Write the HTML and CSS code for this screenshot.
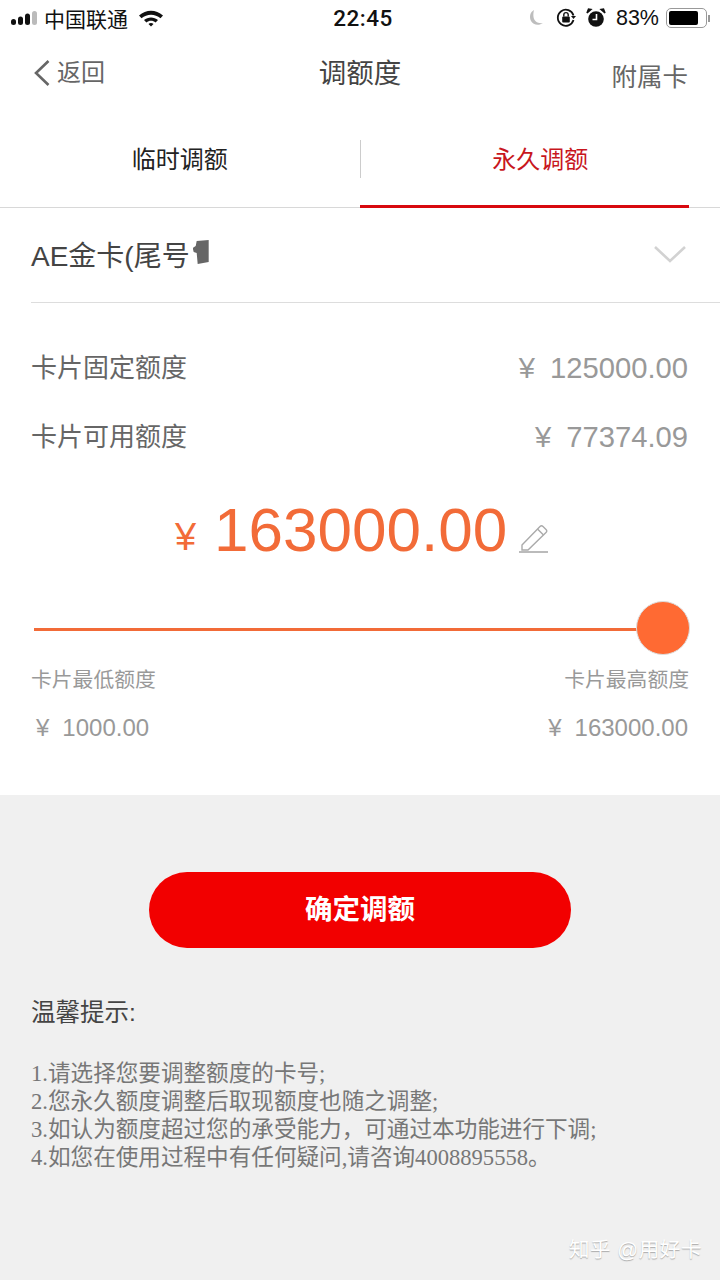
FILE: index.html
```html
<!DOCTYPE html>
<html lang="zh-CN">
<head>
    <meta charset="UTF-8" />
    <meta name="viewport" content="width=device-width, initial-scale=1.0" />
    <title>调额度</title>
    <link rel="stylesheet" href="styles.css">
</head>
<body>
  <div class="page">
    <!-- STATUS BAR -->
    <div class="status-bar">
      <div class="status-left">
        <svg class="signal" width="28" height="16" viewBox="0 0 28 16">
          <rect x="0" y="9" width="5" height="6" rx="2.5" fill="#111"/>
          <rect x="7" y="6.5" width="5" height="8.5" rx="2.5" fill="#111"/>
          <rect x="14" y="3.5" width="5" height="11.5" rx="2.5" fill="#111"/>
          <rect x="21" y="1" width="5" height="14" rx="2.5" fill="#bbb"/>
        </svg>
        <span class="carrier">中国联通</span>
        <svg class="wifi" width="26" height="18" viewBox="0 0 26 18">
          <path d="M1 6.5C8 0 18 0 25 6.5L22.5 9.2C17 4.5 9 4.5 3.5 9.2Z" fill="#111"/>
          <path d="M6 11C10 7.6 16 7.6 20 11L17.6 13.5C15 11.3 11 11.3 8.4 13.5Z" fill="#111"/>
          <path d="M10.5 15C12 13.8 14 13.8 15.5 15L13 17.5Z" fill="#111"/>
        </svg>
      </div>
      <div class="status-time">22:45</div>
      <div class="status-right">
        <svg width="18" height="18" viewBox="0 0 18 18">
          <path d="M7 1C3 3 2 8 4 12C6 16 12 17 16 14C11 15 7 12 6.5 8C6.2 5.5 6.5 3 7 1Z" fill="#bdbdbd"/>
        </svg>
        <svg class="lock" width="20" height="20" viewBox="0 0 20 20">
          <path d="M17.5 12A8 8 0 1 1 17.5 7.5" fill="none" stroke="#111" stroke-width="1.8"/>
          <path d="M15 8H20L17.5 11Z" fill="#111"/>
          <rect x="6.2" y="8.5" width="7.6" height="6" rx="1" fill="#111"/>
          <path d="M7.8 8.5V6.8A2.2 2.2 0 0 1 12.2 6.8V8.5" fill="none" stroke="#111" stroke-width="1.4"/>
        </svg>
        <svg class="alarm" width="20" height="20" viewBox="0 0 20 20">
          <circle cx="10" cy="11" r="7.8" fill="#111"/>
          <path d="M1 5L5 1.5L2.5 1ZM19 5L15 1.5L17.5 1Z" fill="#111" stroke="#111" stroke-width="1.5"/>
          <path d="M10.5 6V11.5H6.5" fill="none" stroke="#fff" stroke-width="1.6"/>
        </svg>
        <span class="battery-pct">83%</span>
        <div class="battery"><div class="battery-fill"></div></div>
        <div class="battery-tip"></div>
      </div>
    </div>

    <!-- NAV -->
    <div class="nav">
      <div class="nav-back">
        <svg width="18" height="28" viewBox="0 0 18 28">
          <path d="M15.5 2L3 14L15.5 26" fill="none" stroke="#666" stroke-width="2.6"/>
        </svg>
        <span class="nav-back-text">返回</span>
      </div>
      <div class="nav-title">调额度</div>
      <div class="nav-extra">附属卡</div>
    </div>

    <!-- TABS -->
    <div class="tabs">
      <div class="tab">临时调额</div>
      <div class="tab-sep"></div>
      <div class="tab active">永久调额</div>
    </div>

    <!-- MAIN CARD -->
    <div class="panel">
      <div class="card-select">
        <div class="card-name">AE金卡(尾号<span class="card-mask"></span></div>
        <svg width="34" height="20" viewBox="0 0 34 20">
          <path d="M2 3L17 17L32 3" fill="none" stroke="#d2d2d2" stroke-width="2.6"/>
        </svg>
      </div>

      <div class="info-row first">
        <span class="info-label">卡片固定额度</span>
        <span class="info-val"><span class="yen">¥</span>125000.00</span>
      </div>
      <div class="info-row">
        <span class="info-label">卡片可用额度</span>
        <span class="info-val"><span class="yen">¥</span>77374.09</span>
      </div>

      <div class="amount">
        <span class="amount-yen">¥</span>
        <span class="amount-num">163000.00</span>
        <svg class="pencil" width="30" height="32" viewBox="0 0 30 32">
          <path d="M3 24L21 5.5C22 4.5 23 4.5 24 5.5L27 8.5C28 9.5 28 10.5 27 11.5L9 29H3Z" fill="none" stroke="#aaa" stroke-width="1.4"/>
          <path d="M18.5 8L24.5 14" fill="none" stroke="#aaa" stroke-width="1.4"/>
          <path d="M0 31H29" fill="none" stroke="#aaa" stroke-width="1.6"/>
        </svg>
      </div>

      <div class="slider">
        <div class="slider-track"></div>
        <div class="slider-knob"></div>
      </div>

      <div class="limit-row labels">
        <span>卡片最低额度</span>
        <span>卡片最高额度</span>
      </div>
      <div class="limit-row values">
        <span><span class="yen small">¥</span>1000.00</span>
        <span><span class="yen small">¥</span>163000.00</span>
      </div>
    </div>

    <!-- BOTTOM -->
    <div class="bottom">
      <button class="confirm-btn">确定调额</button>
      <div class="tips-title">温馨提示:</div>
      <div class="tips">
        <p>1.请选择您要调整额度的卡号;</p>
        <p>2.您永久额度调整后取现额度也随之调整;</p>
        <p>3.如认为额度超过您的承受能力，可通过本功能进行下调;</p>
        <p>4.如您在使用过程中有任何疑问,请咨询4008895558。</p>
      </div>
      <div class="watermark">知乎 @用好卡</div>
    </div>
  </div>
</body>
</html>
```

FILE: styles.css
```css
* {
    box-sizing: border-box;
}

body {
    margin: 0;
    font-family: "Liberation Sans", "Noto Sans CJK SC", sans-serif;
    background: #fff;
}

.page {
    width: 720px;
    height: 1280px;
    overflow: hidden;
    display: flex;
    flex-direction: column;
}

.status-bar {
    height: 36px;
    padding: 0 10px 0 11px;
    display: flex;
    align-items: center;
    justify-content: space-between;
    position: relative;
    color: #111;
}

.status-left,
.status-right {
    display: flex;
    align-items: center;
}

.carrier {
    font-size: 21px;
    margin-left: 5px;
    margin-right: 10px;
}

.status-time {
    position: absolute;
    left: 0;
    right: 0;
    padding-left: 6px;
    text-align: center;
    font-size: 22.5px;
    font-weight: 500;
    font-family: "Roboto", sans-serif;
    letter-spacing: 0.5px;
}

.lock {
    margin-left: 11px;
}

.alarm {
    margin-left: 10px;
}

.battery-pct {
    font-size: 21.5px;
    margin-left: 10px;
    margin-right: 7px;
}

.battery {
    width: 41px;
    height: 20px;
    border: 1.5px solid #999;
    border-radius: 5px;
    padding: 2px;
}

.battery-fill {
    width: 83%;
    height: 100%;
    background: #000;
    border-radius: 2px;
}

.battery-tip {
    width: 2px;
    height: 7px;
    background: #999;
    margin-left: 1px;
}

.nav {
    height: 76px;
    padding: 0 32px 6px 33px;
    display: flex;
    align-items: center;
    justify-content: space-between;
    position: relative;
    color: #666;
}

.nav-back {
    display: flex;
    align-items: center;
    font-size: 24px;
    gap: 6px;
}

.nav-back svg {
    margin-top: 4px;
}

.nav-back-text {
    padding-bottom: 2px;
}

.nav-title {
    position: absolute;
    left: 0;
    right: 0;
    text-align: center;
    font-size: 27.5px;
    color: #444;
}

.nav-extra {
    font-size: 25.5px;
    padding-top: 6px;
}

.tabs {
    height: 96px;
    display: flex;
    align-items: stretch;
    border-bottom: 1px solid #d8d8d8;
}

.tab {
    flex: 1;
    display: flex;
    align-items: center;
    justify-content: center;
    font-size: 24px;
    color: #222;
    padding-bottom: 5px;
    position: relative;
}

.tab.active {
    color: #c8161d;
}

.tab.active::after {
    content: "";
    position: absolute;
    left: -1px;
    right: 31px;
    bottom: -1px;
    height: 3px;
    background: #d8090f;
}

.tab-sep {
    width: 1px;
    height: 38px;
    margin-top: 28px;
    background: #ccc;
}

.panel {
    height: 587px;
    padding: 0 31px;
}

.card-select {
    height: 95px;
    display: flex;
    align-items: center;
    justify-content: space-between;
    border-bottom: 1px solid #ddd;
    margin-right: -31px;
    padding-right: 33px;
    padding-bottom: 2px;
}

.card-name {
    font-size: 28px;
    color: #444;
    display: flex;
    align-items: center;
}

.card-mask {
    display: block;
    width: 16px;
    height: 24px;
    margin-left: 3px;
    margin-top: -4px;
    background: #666;
    clip-path: polygon(4px 1px, 16px 0, 16px 22px, 5px 24px, 4px 13px, 1px 12px, 0 8px, 3px 6px);
}

.info-row {
    display: flex;
    justify-content: space-between;
    align-items: center;
    height: 69px;
    font-size: 26px;
    color: #666;
}

.info-row.first {
    margin-top: 31px;
}

.info-label {
    padding-bottom: 6px;
}

.info-val {
    font-size: 29.2px;
    color: #999;
    padding-right: 1px;
}

.yen {
    margin-right: 15px;
}

.yen.small {
    margin-right: 13px;
}

.amount {
    margin-top: 12px;
    height: 90px;
    display: flex;
    align-items: center;
    justify-content: center;
    color: #f26b38;
    padding-left: 4px;
}

.amount-yen {
    font-size: 38px;
    margin-top: 16px;
    margin-right: 18px;
}

.amount-num {
    font-size: 62px;
}

.pencil {
    margin-left: 12px;
    margin-top: 16px;
}

.slider {
    position: relative;
    height: 56px;
    margin-top: 27px;
    display: flex;
    align-items: center;
}

.slider-track {
    width: 100%;
    height: 3px;
    margin-left: 3px;
    background: #f26b38;
}

.slider-knob {
    position: absolute;
    right: -1px;
    top: 0;
    width: 54px;
    height: 54px;
    border-radius: 50%;
    background: #ff6a33;
    border: 1px solid #ddd;
}

.limit-row {
    display: flex;
    justify-content: space-between;
    align-items: center;
}

.limit-row.labels {
    margin-top: 4px;
    height: 34px;
    font-size: 20.8px;
    color: #999;
}

.limit-row.values {
    margin-top: 16px;
    height: 34px;
    font-size: 24px;
    color: #999;
    padding: 0 1px 0 5px;
}

.bottom {
    flex: 1;
    background: #f0f0f0;
    padding: 77px 31px 0;
    position: relative;
}

.confirm-btn {
    display: block;
    width: 422px;
    height: 76px;
    margin: 0 auto;
    padding: 0 0 6px;
    border: none;
    border-radius: 38px;
    background: #f20000;
    color: #fff;
    font-family: inherit;
    font-size: 27.5px;
    font-weight: 700;
}

.tips-title {
    margin-top: 45px;
    font-size: 24.5px;
    color: #444;
}

.tips {
    margin-top: 32px;
    font-family: "Liberation Serif", "Noto Sans CJK SC", serif;
    font-size: 22.6px;
    line-height: 28px;
    color: #777;
}

.tips p {
    margin: 0;
}

.watermark {
    position: absolute;
    right: 18px;
    bottom: 17px;
    font-size: 20.6px;
    color: #fff;
    letter-spacing: 0.5px;
    text-shadow: 0 1px 1px #aaa;
}
```
